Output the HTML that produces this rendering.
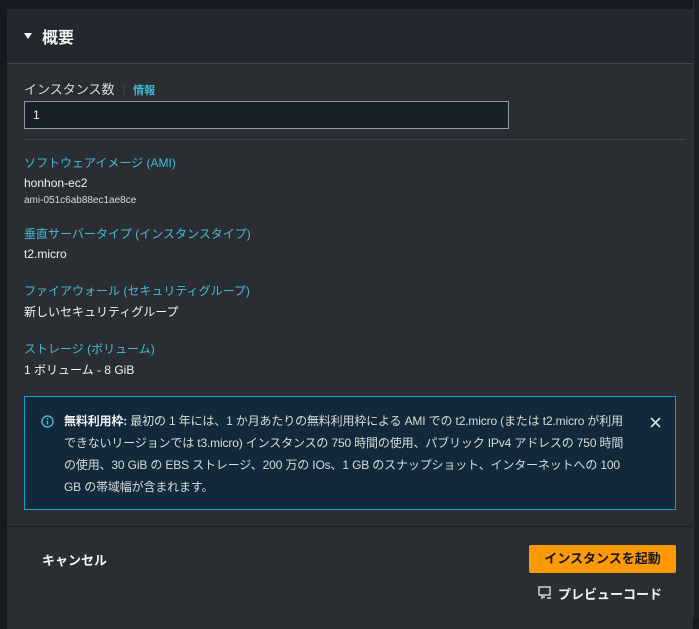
<!DOCTYPE html>
<html><head><meta charset="utf-8"><style>
*{box-sizing:border-box;margin:0;padding:0}
body{width:699px;height:618px;background:#16191f;font-family:"Liberation Sans","Noto Sans CJK JP",sans-serif;color:#d5dbdb;position:relative;overflow:hidden;font-size:12px}
.panel{position:absolute;left:7px;top:9px;width:686px;height:620px;background:#2a2e33}
.hdr{height:55px;background:#23272e;border-bottom:1px solid #414750;display:flex;align-items:center;padding-left:17px;font-weight:bold;font-size:16px;color:#f2f3f3}
.tri{width:0;height:0;border-left:4px solid transparent;border-right:4px solid transparent;border-top:6px solid #f2f3f3;margin-right:10px}
.abs{position:absolute}
.lbl{color:#44b9d6;font-size:12px}
.inp{position:absolute;left:17px;top:92px;width:485px;height:28px;border:1px solid #8d99a8;background:#1a2029;padding-left:8px;line-height:26px;color:#f2f3f3}
.info{position:absolute;left:17px;top:387px;width:652px;height:114px;background:#12293b;border:1px solid #0aa5c8;padding:13px 50px 0 39px;line-height:22px;font-size:12px;letter-spacing:-0.15px;color:#d5dbdb}
.btn{position:absolute;left:522px;top:536px;width:147px;height:28px;background:#ff9900;color:#16191f;font-weight:bold;font-size:13px;text-align:center;line-height:28px;border-radius:2px}
</style></head><body>
<div style="position:absolute;right:0;top:0;width:6px;height:618px;background:#1b1f25;border-left:1px solid #2d3139"></div>
<div class="panel">
<div class="hdr"><div class="tri"></div>概要</div>
<div class="abs" style="left:17px;top:70px;font-size:13px;color:#d5dbdb">インスタンス数 <span style="color:#414750;margin:0 4px">|</span> <span style="color:#44b9d6;font-weight:bold;font-size:11px">情報</span></div>
<div class="inp">1</div>
<div class="abs" style="left:17px;top:130px;width:661px;height:1px;background:#414750"></div>
<div class="abs lbl" style="left:17px;top:145px">ソフトウェアイメージ (AMI)</div>
<div class="abs" style="left:17px;top:167px;color:#f2f3f3">honhon-ec2</div>
<div class="abs" style="left:17px;top:186px;font-size:10px">ami-051c6ab88ec1ae8ce</div>
<div class="abs lbl" style="left:17px;top:216px">垂直サーバータイプ (インスタンスタイプ)</div>
<div class="abs" style="left:17px;top:238px;color:#f2f3f3">t2.micro</div>
<div class="abs lbl" style="left:17px;top:273px">ファイアウォール (セキュリティグループ)</div>
<div class="abs" style="left:17px;top:294px;color:#f2f3f3">新しいセキュリティグループ</div>
<div class="abs lbl" style="left:17px;top:331px">ストレージ (ボリューム)</div>
<div class="abs" style="left:17px;top:352px;color:#f2f3f3">1 ボリューム - 8 GiB</div>
<div class="info">
<svg class="abs" style="left:16px;top:18px" width="13" height="13" viewBox="0 0 13 13"><circle cx="6.5" cy="6.5" r="5.5" fill="none" stroke="#44b9d6" stroke-width="1.4"/><rect x="5.8" y="5.5" width="1.4" height="4" fill="#44b9d6"/><rect x="5.8" y="3" width="1.4" height="1.4" fill="#44b9d6"/></svg>
<svg class="abs" style="left:625px;top:20px" width="11" height="11" viewBox="0 0 11 11"><path d="M1 1L10 10M10 1L1 10" stroke="#d5dbdb" stroke-width="1.6"/></svg>
<b style="color:#f2f3f3">無料利用枠:</b> 最初の 1 年には、1 か月あたりの無料利用枠による AMI での t2.micro (または t2.micro が利用できないリージョンでは t3.micro) インスタンスの 750 時間の使用、パブリック IPv4 アドレスの 750 時間の使用、30 GiB の EBS ストレージ、200 万の IOs、1 GB のスナップショット、インターネットへの 100 GB の帯域幅が含まれます。
</div>
<div class="abs" style="left:0;top:517px;width:686px;height:1px;background:#1a1d22"></div>
<div class="abs" style="left:35px;top:541px;font-weight:bold;font-size:13px;color:#f2f3f3">キャンセル</div>
<div class="btn">インスタンスを起動</div>
<svg class="abs" style="left:531px;top:577px" width="14" height="14" viewBox="0 0 14 14"><rect x="1" y="1" width="11" height="8" fill="none" stroke="#d5dbdb" stroke-width="1.4"/><path d="M4 9v4M4 11h3M9 12h4" stroke="#d5dbdb" stroke-width="1.4"/></svg>
<div class="abs" style="left:551px;top:575px;font-weight:bold;font-size:13px;color:#f2f3f3">プレビューコード</div>
</div>
</body></html>
